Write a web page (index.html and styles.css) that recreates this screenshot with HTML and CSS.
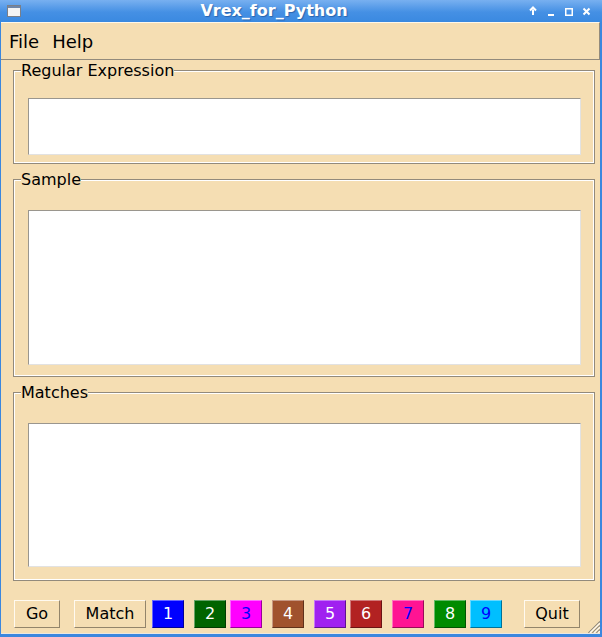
FILE: index.html
```html
<!DOCTYPE html>
<html>
<head>
<meta charset="utf-8">
<title>Vrex_for_Python</title>
<link rel="stylesheet" href="styles.css">
</head>
<body>
<div class="window">
  <div class="titlebar">
    <svg class="app-icon" viewBox="0 0 14 12" width="14" height="12">
      <rect x="0.5" y="0.5" width="13" height="11" fill="#f4f4f4" stroke="#7a7f88"/>
      <rect x="1" y="1" width="12" height="2" fill="#6f86a8"/>
    </svg>
    <div class="title">Vrex_for_Python</div>
    <svg class="controls" viewBox="0 0 76 22" width="76" height="22">
      <g stroke="#fff" stroke-width="2" fill="none">
        <path d="M7 9.5 V15"/>
        <path d="M4 10.5 L7 7.5 L10 10.5"/>
        <path d="M39.75 8.75 H46.25 V15.25 H39.75 Z" stroke-width="1.5"/>
        <path d="M57.5 8.5 L63.5 14.5 M63.5 8.5 L57.5 14.5"/>
      </g>
      <rect x="22" y="14" width="6" height="2" fill="#fff"/>
    </svg>
  </div>
  <div class="frame">
    <div class="menubar">
      <span class="menu">File</span>
      <span class="menu">Help</span>
    </div>
    <div class="body">
      <div class="group g-regex">
        <span class="legend">Regular Expression</span>
        <div class="field field-regex"></div>
      </div>
      <div class="group g-sample">
        <span class="legend">Sample</span>
        <div class="field field-sample"></div>
      </div>
      <div class="group g-matches">
        <span class="legend">Matches</span>
        <div class="field field-matches"></div>
      </div>
      <div class="buttons">
        <button class="btn b-go">Go</button>
        <button class="btn b-match">Match</button>
        <button class="btn cbtn c1">1</button>
        <button class="btn cbtn c2">2</button>
        <button class="btn cbtn c3">3</button>
        <button class="btn cbtn c4">4</button>
        <button class="btn cbtn c5">5</button>
        <button class="btn cbtn c6">6</button>
        <button class="btn cbtn c7">7</button>
        <button class="btn cbtn c8">8</button>
        <button class="btn cbtn c9">9</button>
        <button class="btn b-quit">Quit</button>
      </div>
      <svg class="grip" viewBox="0 0 12 12" width="12" height="12">
        <g stroke-width="1.2">
          <path d="M12 0.5 L0.5 12" stroke="#8a8275"/>
          <path d="M12 1.8 L1.8 12" stroke="#fffaf0"/>
          <path d="M12 4.5 L4.5 12" stroke="#8a8275"/>
          <path d="M12 5.8 L5.8 12" stroke="#fffaf0"/>
          <path d="M12 8.5 L8.5 12" stroke="#8a8275"/>
          <path d="M12 9.8 L9.8 12" stroke="#fffaf0"/>
        </g>
      </svg>
    </div>
  </div>
</div>
</body>
</html>
```

FILE: styles.css
```css
* {
  box-sizing: border-box;
}

body {
  margin: 0;
  font-family: "DejaVu Sans", "Liberation Sans", sans-serif;
  background: #ffffff;
}

.window {
  width: 602px;
  height: 637px;
  display: flex;
  flex-direction: column;
}

.titlebar {
  height: 22px;
  flex: none;
  display: flex;
  align-items: center;
  background: linear-gradient(#78b0f0, #4590e4 55%, #3a89e0);
  color: #ffffff;
}

.app-icon {
  flex: none;
  margin-left: 7px;
  margin-right: 1px;
  display: block;
}

.title {
  flex: 1;
  text-align: center;
  font-weight: bold;
  font-size: 16px;
  line-height: 22px;
  white-space: nowrap;
  text-shadow: 1px 1px 1px rgba(10, 50, 110, 0.45);
}

.controls {
  flex: none;
  display: block;
}

.frame {
  flex: 1;
  display: flex;
  flex-direction: column;
  background: #f5deb3;
  border-left: 1px solid #3b87de;
  border-right: 2px solid #3b87de;
  border-bottom: 3px solid #3b87de;
}

.menubar {
  height: 38px;
  flex: none;
  display: flex;
  align-items: center;
  gap: 13px;
  padding-left: 8px;
  font-size: 18px;
  color: #000000;
  border-top: 1px solid #fff8ea;
  border-right: 1px solid #928a7c;
  border-bottom: 1px solid #928a7c;
}

.body {
  flex: 1;
  position: relative;
  display: flex;
  flex-direction: column;
  padding: 10px 5px 0 12px;
  border-bottom: 1px solid #ece7de;
}

.group {
  position: relative;
  display: flex;
  flex-direction: column;
  border: 1px solid #928a7c;
  box-shadow: inset 0 0 0 1px #ffffff;
  padding-left: 14px;
  padding-right: 13px;
}

.g-regex {
  padding-top: 27px;
  padding-bottom: 8px;
}

.g-sample {
  margin-top: 15px;
  padding-top: 30px;
  padding-bottom: 11px;
}

.g-matches {
  margin-top: 15px;
  padding-top: 30px;
  padding-bottom: 13px;
}

.legend {
  position: absolute;
  top: -10px;
  left: 7px;
  font-size: 16px;
  line-height: 19px;
  background: #f5deb3;
  color: #000000;
  white-space: nowrap;
}

.field {
  background: #ffffff;
  border-top: 1px solid #9a968e;
  border-left: 1px solid #9a968e;
  border-bottom: 1px solid #e2e2e2;
  border-right: 1px solid #e2e2e2;
}

.field-regex {
  height: 57px;
}

.field-sample {
  height: 155px;
}

.field-matches {
  height: 144px;
}

.buttons {
  display: flex;
  margin-top: 19px;
  height: 28px;
}

.btn {
  height: 28px;
  padding: 0;
  font-family: inherit;
  font-size: 16px;
  line-height: 26px;
  text-align: center;
  background: #f5deb3;
  color: #000000;
  border: 1px solid;
  border-color: #fffaf0 #93856b #93856b #fffaf0;
}

.b-go {
  width: 46px;
  margin-left: 1px;
}

.b-match {
  width: 72px;
  margin-left: 14px;
}

.b-quit {
  width: 56px;
  margin-left: 22px;
}

.cbtn {
  width: 32px;
  color: #ffffff;
  border-color: rgba(255, 255, 255, 0.4) rgba(0, 0, 0, 0.4) rgba(0, 0, 0, 0.4) rgba(255, 255, 255, 0.4);
}

.c1 { background: #0000ff; margin-left: 6px; }
.c2 { background: #006400; margin-left: 10px; }
.c3 { background: #ff00ff; margin-left: 4px; color: #0000ff; }
.c4 { background: #a0522d; margin-left: 10px; }
.c5 { background: #a020f0; margin-left: 10px; }
.c6 { background: #b22222; margin-left: 4px; }
.c7 { background: #ff1493; margin-left: 10px; color: #0000ff; }
.c8 { background: #008b00; margin-left: 10px; }
.c9 { background: #00bfff; margin-left: 4px; color: #0000ff; }

.grip {
  position: absolute;
  right: 0;
  bottom: 0;
  display: block;
}
```
